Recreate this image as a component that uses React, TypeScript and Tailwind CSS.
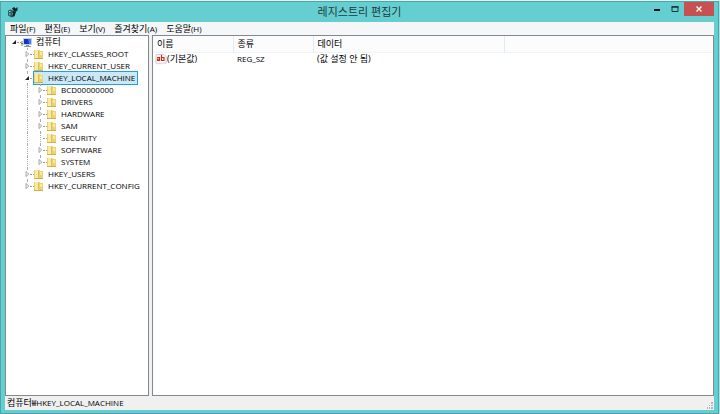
import React from 'react';

type TreeNode = {
  name: string;
  level: 0 | 1 | 2;
  state: 'open' | 'closed' | 'leaf';
  selected?: boolean;
  last?: boolean;
};

const nodes: TreeNode[] = [
  { name: '컴퓨터', level: 0, state: 'open' },
  { name: 'HKEY_CLASSES_ROOT', level: 1, state: 'closed' },
  { name: 'HKEY_CURRENT_USER', level: 1, state: 'closed' },
  { name: 'HKEY_LOCAL_MACHINE', level: 1, state: 'open', selected: true },
  { name: 'BCD00000000', level: 2, state: 'closed' },
  { name: 'DRIVERS', level: 2, state: 'closed' },
  { name: 'HARDWARE', level: 2, state: 'closed' },
  { name: 'SAM', level: 2, state: 'closed' },
  { name: 'SECURITY', level: 2, state: 'leaf' },
  { name: 'SOFTWARE', level: 2, state: 'closed' },
  { name: 'SYSTEM', level: 2, state: 'closed', last: true },
  { name: 'HKEY_USERS', level: 1, state: 'closed' },
  { name: 'HKEY_CURRENT_CONFIG', level: 1, state: 'closed', last: true },
];

const menus = [
  { label: '파일', key: '(F)' },
  { label: '편집', key: '(E)' },
  { label: '보기', key: '(V)' },
  { label: '즐겨찾기', key: '(A)' },
  { label: '도움말', key: '(H)' },
];

const RegistryIcon = () => (
  <svg width="11" height="12" viewBox="0 0 11 12" aria-hidden="true">
    <path d="M1 4.5 3.5 3.5 7.500 5v5L4.500 11.500 1 9.500Z" fill="#2c6064" />
    <path d="M2 5.500h1.500M2 8h1.500M5 8h1.500" stroke="#9adfe2" strokeWidth="1" />
    <path d="m5 2.500 2-1.500 1.500 1.500L10.500 1v3.500L8.500 6 7 5Z" fill="#0c2426" />
    <path d="m6 5 3 1-1.500 4-2 1Z" fill="#0c2426" />
  </svg>
);

const FolderIcon = () => (
  <svg width="10" height="11" viewBox="0 0 10 11" className="shrink-0" aria-hidden="true">
    <path d="M0 1h6v1h3v8H0Z" fill="#ecd271" />
    <path d="M1 1h3v8H1Z" fill="#f9eaa4" />
    <path d="M6 3h2v3H6Z" fill="#f8e9a0" />
    <path d="M4 2h1v8H4Z" fill="#dfc055" />
    <path d="M0 9h9v1H0Z" fill="#d3b14a" />
  </svg>
);

const ComputerIcon = () => (
  <svg width="12" height="11" viewBox="0 0 12 11" className="shrink-0" aria-hidden="true">
    <path d="M0 4h2v5H0Z" fill="#b8c4bd" />
    <path d="M0 6h2v1H0Z" fill="#39a344" />
    <path d="M2 1h9v7H2Z" fill="#c3cfe0" />
    <path d="M3 2h7v5H3Z" fill="#1532c4" />
    <path d="M7 2h3v5H8Z" fill="#4a79ec" />
    <path d="M5 8h3v1h2v1H3V9h2Z" fill="#8794a6" />
  </svg>
);

const StringIcon = () => (
  <svg width="12" height="12" viewBox="0 0 12 12" className="shrink-0" aria-hidden="true">
    <path d="M1 1.500h8l2 2v7L9 9.800 7 11l-2-1-2 1-2-.800Z" fill="#fff" stroke="#c4c4c4" strokeWidth="0.8" />
    <path d="M2 4.500h2.500v3.500M4.500 6H2.500v1.500h2" fill="none" stroke="#d2281c" strokeWidth="1.200" />
    <path d="M6.500 2v5.500h2.500V4.500H6.500" fill="none" stroke="#d2281c" strokeWidth="1.200" />
  </svg>
);

const Arrow = ({ state }: { state: TreeNode['state'] }) => {
  if (state === 'leaf') return <span className="w-1.5 shrink-0" />;
  return (
    <svg width="6" height="8" viewBox="0 0 6 8" className="relative shrink-0 bg-white" aria-hidden="true">
      {state === 'open' ? (
        <path d="M5 2v4H1Z" fill="#222" />
      ) : (
        <path d="M2 1.500 4.800 4 2 6.500Z" fill="#fff" stroke="#9a9a9a" strokeWidth="0.900" />
      )}
    </svg>
  );
};

const TreeRow = ({ node }: { node: TreeNode }) => (
  <li role="treeitem" aria-level={node.level + 1} aria-selected={!!node.selected} className="flex h-3 items-center">
    {node.level === 0 ? <span className="w-[5px] shrink-0" /> : <span className="w-[18px] shrink-0" />}
    {node.level === 2 && (
      <span className="flex w-[13px] shrink-0 self-stretch">
        <span className="ml-[3px] border-l border-dotted border-[#aaa]" />
      </span>
    )}
    <span className="relative flex shrink-0 items-center self-stretch">
      {node.level > 0 && (
        <span
          className={
            node.last
              ? 'absolute top-0 left-[3px] h-1/2 border-l border-dotted border-[#aaa]'
              : 'absolute inset-y-0 left-[3px] border-l border-dotted border-[#aaa]'
          }
        />
      )}
      <Arrow state={node.state} />
      <span className="w-[4px] border-t border-dotted border-[#999]" />
    </span>
    <button
      type="button"
      className={
        node.selected
          ? 'flex h-3 items-center gap-1 whitespace-nowrap bg-[#cbe8f6] pr-[2px] text-[8px] outline outline-[#26a0da]'
          : node.level === 0
            ? 'flex h-3 items-center gap-[3px] whitespace-nowrap'
            : 'flex h-3 items-center gap-1 whitespace-nowrap text-[8px]'
      }
    >
      {node.level === 0 ? <ComputerIcon /> : <FolderIcon />}
      <span>{node.name}</span>
    </button>
  </li>
);

const TitleBar = () => (
  <header className="grid h-5 shrink-0 grid-cols-[1fr_auto_1fr] items-start">
    <div className="pt-1 pl-0.5">
      <RegistryIcon />
    </div>
    <h1 className="pt-[3px] text-[11px] leading-[14px] text-[#1f3a3c]">레지스트리 편집기</h1>
    <div className="flex justify-end">
      <button type="button" aria-label="최소화" className="flex h-[14px] w-[18px] items-center justify-center">
        <svg width="8" height="8" viewBox="0 0 8 8">
          <path d="M1 4h6v2H1Z" fill="#111" />
        </svg>
      </button>
      <button type="button" aria-label="최대화" className="flex h-[14px] w-[18px] items-center justify-center">
        <svg width="8" height="8" viewBox="0 0 8 8">
          <path d="M1 2h6v4.500H1Z" fill="none" stroke="#173638" strokeWidth="1" />
          <path d="M.5 1.800h7" stroke="#173638" strokeWidth="1.500" />
        </svg>
      </button>
      <button type="button" aria-label="닫기" className="flex h-[14px] w-[30px] items-center justify-center bg-[#c75050]">
        <svg width="8" height="8" viewBox="0 0 8 8">
          <path d="m1.500 1.500 5 5m0-5-5 5" stroke="#fff" strokeWidth="1.300" />
        </svg>
      </button>
    </div>
  </header>
);

export default function App() {
  return (
    <div className="flex h-screen flex-col border-t border-r border-t-[#dff3f4] border-r-[#a9e2e4] bg-[#65ced1] font-['Open_Sans','Noto_Sans_CJK_KR',sans-serif] text-[9px] leading-3 text-black">
      <div className="flex min-h-0 flex-1 flex-col border border-[#4ba5a9] px-1 pb-[3px]">
        <TitleBar />
        <nav className="flex h-[13px] shrink-0 items-center gap-[9px] bg-[#f5f6f7] pl-[5px]">
          {menus.map((menu) => (
            <button type="button" key={menu.key} className="whitespace-nowrap">
              {menu.label}
              <span className="text-[8px]">{menu.key}</span>
            </button>
          ))}
        </nav>

        <main className="flex min-h-0 flex-1 gap-[3px] bg-[#f0f0f0]">
          <ul role="tree" className="w-36 shrink-0 overflow-hidden border border-[#828790] bg-white">
            {nodes.map((node) => (
              <TreeRow key={node.name} node={node} />
            ))}
          </ul>
          <section className="min-w-0 flex-1 overflow-hidden border border-[#828790] bg-white">
            <table className="w-full table-fixed border-collapse text-left">
              <colgroup>
                <col className="w-20" />
                <col className="w-20" />
                <col className="w-[191px]" />
                <col />
              </colgroup>
              <thead>
                <tr className="h-4 border-b border-[#edf3fa] bg-[#fcfcfc]">
                  <th className="border-r border-[#e0ebf8] p-0 pl-1 font-normal">이름</th>
                  <th className="border-r border-[#e0ebf8] p-0 pl-1 font-normal">종류</th>
                  <th className="border-r border-[#e0ebf8] p-0 pl-1 font-normal">데이터</th>
                  <td className="p-0" />
                </tr>
              </thead>
              <tbody>
                <tr className="h-[13px]">
                  <td className="p-0 pl-0.5">
                    <span className="flex items-center">
                      <StringIcon />
                      (기본값)
                    </span>
                  </td>
                  <td className="p-0 pl-1 text-[8px]">REG_SZ</td>
                  <td className="p-0 pl-1">(값 설정 안 됨)</td>
                  <td className="p-0" />
                </tr>
              </tbody>
            </table>
          </section>
        </main>

        <footer className="flex h-[14px] shrink-0 items-center justify-between bg-[#f0f0f0] pl-0.5">
          <span className="whitespace-nowrap">
            컴퓨터<span className="text-[8px]">₩HKEY_LOCAL_MACHINE</span>
          </span>
          <svg width="8" height="8" viewBox="0 0 8 8" className="self-end" aria-hidden="true">
            <path d="M5 0h2v2H5ZM3 3h1v1H3ZM5 3h2v1H5ZM1 5h1v2H1ZM3 5h1v2H3ZM5 5h2v2H5Z" fill="#b4b4b4" />
          </svg>
        </footer>
      </div>
    </div>
  );
}
